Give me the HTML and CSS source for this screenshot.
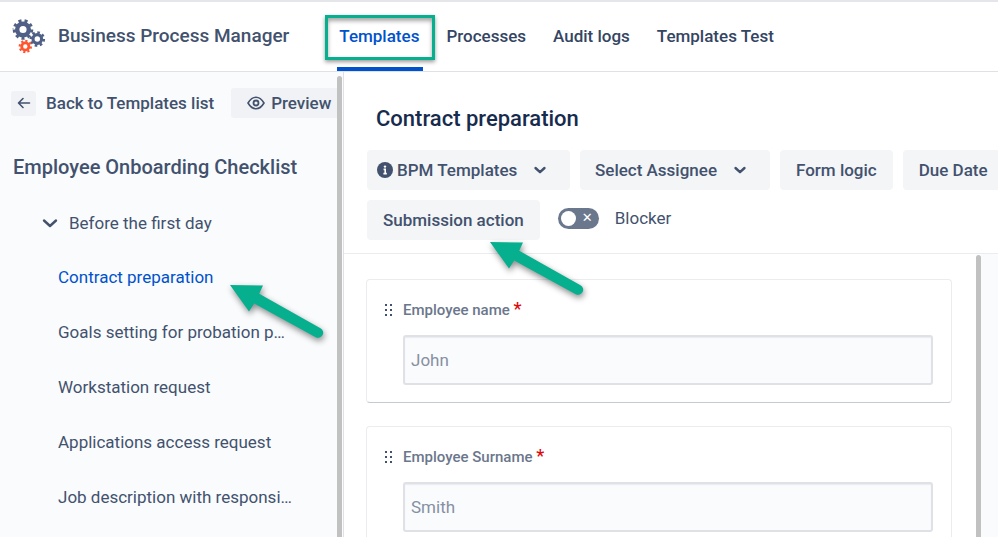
FILE: index.html
```html
<!DOCTYPE html>
<html lang="en">
<head>
    <meta charset="utf-8">
    <meta name="viewport" content="width=device-width, initial-scale=1">
    <title>Business Process Manager</title>
    <link rel="stylesheet" href="styles.css">
</head>
<body>
    <!-- shared shapes -->
    <svg class="defs" width="0" height="0" aria-hidden="true">
        <symbol id="chevron" viewBox="0 0 14 14">
            <path d="M2.5 5 L7 9.2 L11.5 5" fill="none" stroke="currentColor" stroke-width="2.4" stroke-linecap="round" stroke-linejoin="round"/>
        </symbol>
        <symbol id="chevron-wide" viewBox="0 0 18 18">
            <path d="M3 6.5 L9 12 L15 6.5" fill="none" stroke="currentColor" stroke-width="2.4" stroke-linecap="round" stroke-linejoin="round"/>
        </symbol>
        <symbol id="drag" viewBox="0 0 10 14">
            <path d="M1 1h2v2h-2z M6 1h2v2h-2z M1 6h2v2h-2z M6 6h2v2h-2z M1 11h2v2h-2z M6 11h2v2h-2z" fill="currentColor"/>
        </symbol>
        <symbol id="arrow" viewBox="0 0 104 66">
            <path d="M4 4 L37 4.6 L33.2 12.7 L94.5 47.2 A5 5 0 0 1 89.7 56.2 L28.2 22.4 L23 30.6 Z" fill="#06b08f"/>
        </symbol>
    </svg>

    <header class="topbar">
        <a class="brand" href="#">
            <svg class="logo" width="34" height="36" viewBox="0 0 34 36" fill="none" aria-hidden="true">
                <g stroke="#505f86">
                    <circle cx="11" cy="11.5" r="5.8" stroke-width="4.4"/>
                    <circle cx="11" cy="11.5" r="8.8" stroke-width="3" pathLength="18" stroke-dasharray="1 1"/>
                    <circle cx="25.3" cy="21" r="4.3" stroke-width="3.2"/>
                    <circle cx="25.3" cy="21" r="6.6" stroke-width="2.4" pathLength="16" stroke-dasharray="1 1"/>
                </g>
                <g stroke="#ff5630">
                    <circle cx="13.3" cy="28.5" r="3.6" stroke-width="2.8"/>
                    <circle cx="13.3" cy="28.5" r="5.6" stroke-width="2.2" pathLength="16" stroke-dasharray="1 1"/>
                </g>
            </svg>
            <span>Business Process Manager</span>
        </a>
        <nav class="tabs">
            <a class="tab active" href="#">Templates<span class="marker"></span></a>
            <a class="tab" href="#">Processes</a>
            <a class="tab" href="#">Audit logs</a>
            <a class="tab" href="#">Templates Test</a>
        </nav>
    </header>

    <div class="container">
        <aside class="sidebar">
            <div class="sidebar-content">
                <div class="back-row">
                    <button class="back-btn" type="button" aria-label="Back">
                        <svg width="14" height="12" viewBox="0 0 14 12" fill="none" stroke="currentColor" stroke-width="1.6" stroke-linecap="round" stroke-linejoin="round"><path d="M12.5 6H2 M6 1.5 L1.5 6 L6 10.5"/></svg>
                    </button>
                    <a class="back-link" href="#">Back to Templates list</a>
                    <button class="preview-btn" type="button">
                        <svg width="18" height="14" viewBox="0 0 18 14" fill="none" stroke="currentColor"><path d="M1 7 C3.5 2.8 6 1.2 9 1.2 S14.5 2.8 17 7 C14.5 11.2 12 12.8 9 12.8 S3.5 11.2 1 7 Z" stroke-width="1.6" stroke-linejoin="round"/><circle cx="9" cy="7" r="2.5" stroke-width="1.8"/></svg>
                        Preview
                    </button>
                </div>
                <h2 class="checklist-title">Employee Onboarding Checklist</h2>
                <button class="group" type="button">
                    <svg width="18" height="18"><use href="#chevron-wide"/></svg>
                    Before the first day
                </button>
                <ul class="steps">
                    <li>
                        <a class="active" href="#">Contract preparation</a>
                        <svg class="pointer step-pointer" width="104" height="66" aria-hidden="true"><use href="#arrow"/></svg>
                    </li>
                    <li><a href="#">Goals setting for probation p…</a></li>
                    <li><a href="#">Workstation request</a></li>
                    <li><a href="#">Applications access request</a></li>
                    <li><a href="#">Job description with responsi…</a></li>
                </ul>
            </div>
            <div class="scrollbar"></div>
        </aside>

        <main class="main">
            <div class="main-head">
                <h1 class="title">Contract preparation</h1>
                <div class="toolbar">
                    <div class="btn dropdown with-icon">
                        <svg width="16" height="16" viewBox="0 0 16 16" aria-hidden="true"><circle cx="8" cy="8" r="8" fill="currentColor"/><circle cx="8" cy="4.6" r="1.2" fill="#fff"/><path d="M6.6 7.4h1.6v4 M6.4 11.6h3.4" fill="none" stroke="#fff" stroke-width="1.6"/></svg>
                        <select aria-label="Template space"><option>BPM Templates</option></select>
                        <svg class="caret" width="14" height="14" aria-hidden="true"><use href="#chevron"/></svg>
                    </div>
                    <div class="btn dropdown">
                        <select aria-label="Assignee"><option>Select Assignee</option></select>
                        <svg class="caret" width="14" height="14" aria-hidden="true"><use href="#chevron"/></svg>
                    </div>
                    <button class="btn" type="button">Form logic</button>
                    <button class="btn" type="button">Due Date</button>
                    <div class="action">
                        <button class="btn" type="button">Submission action</button>
                        <svg class="pointer action-pointer" width="104" height="66" aria-hidden="true"><use href="#arrow"/></svg>
                    </div>
                    <div class="switch">
                        <input type="checkbox" id="blocker">
                        <label for="blocker">Blocker</label>
                    </div>
                </div>
            </div>

            <div class="form-area">
                <form class="fields">
                    <div class="card">
                        <svg class="handle" width="10" height="14" aria-hidden="true"><use href="#drag"/></svg>
                        <label for="name">Employee name <span class="required">*</span></label>
                        <input type="text" id="name" placeholder="John">
                    </div>
                    <div class="card">
                        <svg class="handle" width="10" height="14" aria-hidden="true"><use href="#drag"/></svg>
                        <label for="surname">Employee Surname <span class="required">*</span></label>
                        <input type="text" id="surname" placeholder="Smith">
                    </div>
                </form>
                <div class="scrollbar"></div>
                <div class="gutter"></div>
            </div>
        </main>
    </div>
</body>
</html>
```
FILE: styles.css
```css
* {
    box-sizing: border-box;
}

body {
    margin: 0;
    height: 100vh;
    display: flex;
    flex-direction: column;
    overflow: hidden;
    font-family: Roboto, "Liberation Sans", sans-serif;
    font-size: 17px;
    line-height: 24px;
    color: #42526e;
    background: #fff;
}

a {
    color: inherit;
    text-decoration: none;
}

button, select, input {
    font: inherit;
    color: inherit;
}

button {
    border: none;
    padding: 0;
    background: none;
    cursor: pointer;
}

ul, h1, h2 {
    margin: 0;
    padding: 0;
}

.defs {
    position: absolute;
}

/* top bar */
.topbar {
    display: flex;
    flex: none;
    height: 72px;
    padding-left: 12px;
    border-top: 2px solid #e4e6ea;
    border-bottom: 1px solid #dfe1e6;
    font-weight: 500;
    white-space: nowrap;
}

.brand {
    display: flex;
    align-items: center;
    gap: 12px;
    padding-bottom: 1px;
    font-size: 19px;
}

.tabs {
    display: flex;
    gap: 27px;
    margin-left: 50px;
    color: #344563;
}

.tab {
    position: relative;
    display: flex;
    align-items: center;
    padding-bottom: 2px;
}

.tab.active {
    color: #0052cc;
}

.tab.active::after {
    content: "";
    position: absolute;
    left: -2px;
    right: -4px;
    bottom: 0;
    height: 4px;
    background: #0052cc;
}

.marker {
    position: absolute;
    top: 13px;
    left: -14px;
    right: -16px;
    height: 45px;
    border: 3px solid #06b08f;
    box-shadow: 0 2px 4px rgba(0, 0, 0, .4), inset 0 3px 4px rgba(0, 0, 0, .35);
}

.container {
    display: flex;
    flex: 1;
    min-height: 0;
}

.scrollbar {
    flex: none;
    width: 5px;
    background: #c1c1c1;
    border-radius: 3px 3px 0 0;
}

/* sidebar */
.sidebar {
    display: flex;
    flex: none;
    width: 344px;
    padding-right: 1px;
    background: #fafbfd;
    border-right: 1px solid #dfe1e6;
}

.sidebar .scrollbar {
    margin-top: 4px;
}

.sidebar-content {
    flex: 1;
    min-width: 0;
    overflow: hidden;
    padding-top: 16px;
}

.back-row {
    display: flex;
    align-items: center;
    padding-left: 11px;
    font-weight: 500;
    white-space: nowrap;
}

.back-btn {
    display: flex;
    flex: none;
    align-items: center;
    justify-content: center;
    width: 25px;
    height: 25px;
    border-radius: 3px;
    background: #f1f2f5;
}

.back-link {
    margin: 0 17px 0 10px;
}

.preview-btn {
    display: flex;
    flex: none;
    align-items: center;
    gap: 6px;
    height: 30px;
    padding: 0 16px;
    border-radius: 3px;
    background: #f1f2f5;
    font-weight: 500;
}

.checklist-title {
    margin: 37px 0 32px 13px;
    font-size: 20px;
    font-weight: 500;
}

.group {
    display: flex;
    align-items: center;
    gap: 10px;
    height: 24px;
    margin-left: 41px;
}

.steps {
    margin-top: 15px;
    padding-left: 58px;
    list-style: none;
}

.steps li {
    position: relative;
}

.steps a {
    display: block;
    line-height: 55px;
    overflow: hidden;
    text-overflow: ellipsis;
    white-space: nowrap;
}

.steps .active {
    color: #0052cc;
}

.pointer {
    position: absolute;
    z-index: 2;
    pointer-events: none;
    filter: drop-shadow(1px 3px 3px rgba(0, 0, 0, .45));
}

.step-pointer {
    left: 168px;
    top: 31px;
}

/* main */
.main {
    display: flex;
    flex: 1;
    flex-direction: column;
    min-width: 0;
}

.main-head {
    padding: 33px 0 13px 23px;
    border-bottom: 1px solid #ebecf0;
}

.title {
    margin: 0 0 17px 9px;
    font-size: 22px;
    font-weight: 500;
    line-height: 28px;
    color: #172b4d;
}

/* the last button of the first row runs past the edge */
.toolbar {
    display: flex;
    flex-wrap: wrap;
    gap: 10px;
    margin-right: -20px;
}

.btn {
    height: 40px;
    padding: 0 16px;
    border-radius: 4px;
    background: #f4f5f7;
    font-weight: 500;
    white-space: nowrap;
}

.dropdown {
    display: flex;
    align-items: center;
    padding: 0 23px 0 15px;
}

.dropdown.with-icon {
    gap: 4px;
    padding-left: 10px;
}

.dropdown select {
    appearance: none;
    border: none;
    padding: 0;
    background: none;
}

.caret {
    margin-left: 15px;
}

.with-icon .caret {
    margin-left: 11px;
}

.action {
    position: relative;
}

.action-pointer {
    left: 119px;
    top: 38px;
}

.switch {
    display: flex;
    align-items: center;
    gap: 16px;
    height: 36px;
    margin-left: 8px;
}

.switch input {
    appearance: none;
    display: flex;
    align-items: center;
    justify-content: space-between;
    width: 41px;
    height: 21px;
    margin: 0;
    padding: 0 6px 0 3px;
    border-radius: 11px;
    background: #6b778c;
}

.switch input::before {
    content: "";
    width: 15px;
    height: 15px;
    border-radius: 50%;
    background: #fff;
}

.switch input::after {
    content: "✕";
    color: #fff;
    font: bold 13px/20px "DejaVu Sans", sans-serif;
}

/* form */
.form-area {
    display: flex;
    flex: 1;
    min-height: 0;
}

.fields {
    flex: 1;
    min-width: 0;
    padding: 25px 24px 0 22px;
    overflow: hidden;
}

.card {
    display: grid;
    grid-template-columns: 19px 1fr;
    align-items: center;
    row-gap: 13px;
    margin-bottom: 23px;
    padding: 18px 18px 17px 17px;
    border: 1px solid #ebecf0;
    border-bottom-color: #c5cad3;
    border-radius: 4px;
}

.card label {
    font-size: 15px;
    font-weight: 500;
    color: #6b778c;
}

.required {
    font-size: 18px;
    line-height: 20px;
    color: #de0a0a;
}

.card input {
    grid-column: 2;
    width: 100%;
    height: 50px;
    padding: 0 6px;
    border: 2px solid #dfe1e6;
    border-radius: 3px;
    background: #fafbfd;
    box-shadow: inset 0 1px 1px #e9ebef;
}

.card input::placeholder {
    color: #8590a2;
}

.form-area .scrollbar {
    margin-top: 1px;
}

.gutter {
    flex: none;
    width: 17px;
    background: #fafbfd;
}
```
